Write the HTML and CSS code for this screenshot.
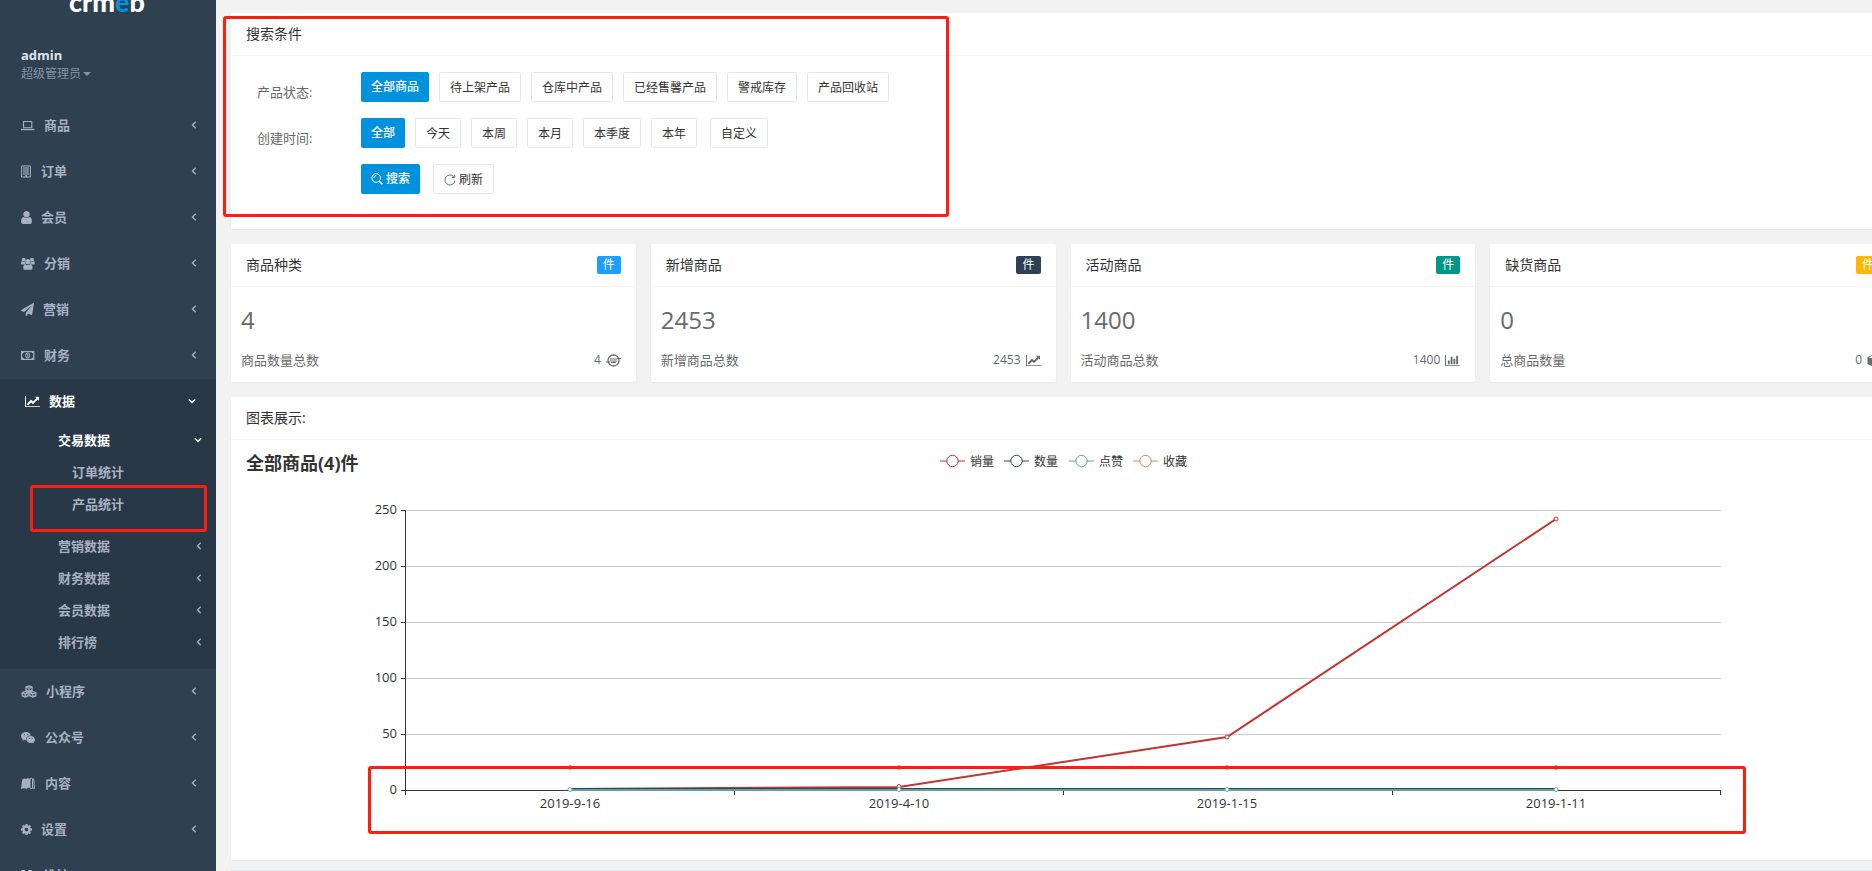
FILE: index.html
```html
<!DOCTYPE html>
<html lang="zh-CN">
<head>
<meta charset="utf-8">
<title>产品统计</title>
<link rel="stylesheet" href="styles.css">
</head>
<body>
<svg class="defs" aria-hidden="true">
  <symbol id="left" viewBox="0 0 6 8"><path d="M4.7 .8 1.5 4l3.2 3.2" fill="none" stroke="currentColor" stroke-width="1.3"/></symbol>
  <symbol id="down" viewBox="0 0 8 6"><path d="M.8 1.3 4 4.5l3.2-3.2" fill="none" stroke="currentColor" stroke-width="1.4"/></symbol>
  <symbol id="linechart" viewBox="0 0 2048 1792"><path fill="currentColor" d="M2048 1536v128h-2048v-1536h128v1408h1920zm-128-1248v435q0 21-19.5 29.5t-35.5-7.5l-121-121-633 633q-10 10-23 10t-23-10l-233-233-416 416-192-192 585-585q10-10 23-10t23 10l233 233 464-464-121-121q-16-16-7.5-35.5t29.5-19.5h435q14 0 23 9t9 23z"/></symbol>
</svg>
<div class="layout">
  <aside class="sidebar">
    <div class="brand">crm<span>e</span>b</div>
    <div class="profile">
      <strong>admin</strong>
      <a href="#">超级管理员<i class="caret"></i></a>
    </div>
    <nav>
      <ul class="menu">
        <li><a href="#"><svg width="14" height="13" viewBox="0 0 14 13"><path d="M2.6 2.5h8.2v6.200H2.600z" fill="none" stroke="currentColor" stroke-width="1.100"/><path d="M0 9.900h13.400v1.300H0z" fill="currentColor"/></svg><span>商品</span><svg class="arrow" width="6" height="8"><use href="#left"/></svg></a></li>
        <li><a href="#"><svg width="11" height="13" viewBox="0 0 11 13"><path d="M.6 1h8.800v11H.6z" fill="none" stroke="currentColor"/><path d="M2.200 3h5.800M2.200 5h5.800M2.200 7h5.800M2.200 9h5.800" stroke="currentColor" stroke-width="1.300" stroke-dasharray="1.500 .500"/><path d="M4.200 10h1.800v2H4.200z" fill="currentColor"/></svg><span>订单</span><svg class="arrow" width="6" height="8"><use href="#left"/></svg></a></li>
        <li><a href="#"><svg width="11" height="13" viewBox="256 128 1280 1536"><path fill="currentColor" d="M1536 1399q0 109-62.5 187t-150.5 78h-854q-88 0-150.5-78t-62.5-187q0-85 8.500-160.500t31.500-152 58.500-131 94-89 134.500-34.500q131 128 313 128t313-128q76 0 134.500 34.500t94 89 58.500 131 31.500 152 8.500 160.500zm-256-887q0 159-112.500 271.500t-271.500 112.500-271.500-112.500-112.500-271.500 112.500-271.500 271.500-112.500 271.500 112.500 112.500 271.500z"/></svg><span>会员</span><svg class="arrow" width="6" height="8"><use href="#left"/></svg></a></li>
        <li><a href="#"><svg width="14" height="13" viewBox="0 0 14 13" fill="currentColor"><circle cx="2.700" cy="2.600" r="1.900"/><circle cx="11" cy="2.600" r="1.900"/><circle cx="6.900" cy="4.700" r="2.600"/><path d="M0 7V5.500Q0 4 1.200 4.200q1.400.8 2.700.4-.2 1.600.8 2.900H1Q0 7.400 0 7zM13.700 7V5.500q0-1.500-1.200-1.300-1.400.8-2.700.4.2 1.600-.8 2.900h3.700q1 0 1-.5zM2.200 11.200q0-4 2.300-3.800 2.300 1.400 4.700 0 2.400-.2 2.400 3.800 0 1.500-1.700 1.500H3.900q-1.700 0-1.700-1.500z"/></svg><span>分销</span><svg class="arrow" width="6" height="8"><use href="#left"/></svg></a></li>
        <li><a href="#"><svg width="13" height="13" viewBox="0 0 1792 1792"><path fill="currentColor" d="M1764 11q33 24 27 64l-256 1536q-5 29-32 45-14 8-31 8-11 0-24-5l-453-185-242 295q-18 23-49 23-13 0-22-4-19-7-30.500-23.500t-11.500-36.500v-349l864-1059-1069 925-395-162q-37-14-40-55-2-40 32-59l1664-960q15-9 32-9 20 0 36 11z"/></svg><span>营销</span><svg class="arrow" width="6" height="8"><use href="#left"/></svg></a></li>
        <li><a href="#"><svg width="14" height="13" viewBox="0 0 14 13"><path d="M.6 2.600h12.200v7.800H.6z" fill="none" stroke="currentColor" stroke-width="1.200"/><path d="M1 3h2.200L1 5zM12.400 3v2l-2-2zM1 10V8l2.200 2zM12.400 10V8l-2 2z" fill="currentColor"/><ellipse cx="6.700" cy="6.500" rx="2" ry="2.500" fill="none" stroke="currentColor"/><path d="M6.700 5v3" stroke="currentColor"/></svg><span>财务</span><svg class="arrow" width="6" height="8"><use href="#left"/></svg></a></li>
        <li class="open">
          <a href="#"><svg width="15" height="13"><use href="#linechart"/></svg><span>数据</span><svg class="arrow" width="8" height="6"><use href="#down"/></svg></a>
          <ul class="sub">
            <li class="current"><a href="#"><span>交易数据</span><svg class="arrow" width="8" height="6"><use href="#down"/></svg></a>
              <ul class="third">
                <li><a href="#">订单统计</a></li>
                <li><a href="#">产品统计</a></li>
              </ul>
            </li>
            <li><a href="#"><span>营销数据</span><svg class="arrow" width="6" height="8"><use href="#left"/></svg></a></li>
            <li><a href="#"><span>财务数据</span><svg class="arrow" width="6" height="8"><use href="#left"/></svg></a></li>
            <li><a href="#"><span>会员数据</span><svg class="arrow" width="6" height="8"><use href="#left"/></svg></a></li>
            <li><a href="#"><span>排行榜</span><svg class="arrow" width="6" height="8"><use href="#left"/></svg></a></li>
          </ul>
        </li>
        <li><a href="#"><svg width="16" height="13" viewBox="0 0 15 13" fill="none" stroke="currentColor" stroke-width="1.300"><path d="M7.500.9 10.500 2v3.200L7.500 6.500l-3-1.300V2zM4.500 2l3 1.300 3-1.300M7.500 3.300v3M3.700 6.500l3 1.200v3L3.700 12l-3-1.300v-3zM.7 7.700l3 1.300 3-1.300M3.700 9v3M11.300 6.500l3 1.200v3l-3 1.300-3-1.300v-3zM8.300 7.700l3 1.300 3-1.300M11.300 9v3"/></svg><span>小程序</span><svg class="arrow" width="6" height="8"><use href="#left"/></svg></a></li>
        <li><a href="#"><svg width="15" height="13" viewBox="0 0 15 13"><path fill="currentColor" d="M5 .9c2.500 0 4.500 1.500 4.900 3.500-2.900 0-5 1.800-5 4.100l.1.700-1.800-.3-1.700.9.400-1.500C.7 7.400 0 6.200 0 4.900 0 2.700 2.300.9 5 .9z"/><path fill="currentColor" d="M9.700 4.900c2.400 0 4.300 1.600 4.300 3.600 0 1.100-.6 2-1.500 2.700l.4 1.300-1.500-.8-1.700.3c-2.400 0-4.300-1.600-4.300-3.500s1.900-3.600 4.300-3.600z"/><g fill="#2f4050"><circle cx="3.400" cy="3.600" r=".6"/><circle cx="6.700" cy="3.600" r=".6"/><circle cx="8.300" cy="7.500" r=".5"/><circle cx="11.100" cy="7.500" r=".5"/></g></svg><span>公众号</span><svg class="arrow" width="6" height="8"><use href="#left"/></svg></a></li>
        <li><a href="#"><svg width="15" height="13" viewBox="0 0 15 13"><path fill="currentColor" d="M1.200 2.500Q3.500.6 5.200 2q.8-1.500 4.300-.3v9.200q-2.900-.6-4 1Q3.200 10.400 0 12z"/><path d="M9 1.700q1.700-1 2.800.4h.9l.8 9.300q-2.400-.8-4.300.4M11.500 2v9" fill="none" stroke="currentColor"/></svg><span>内容</span><svg class="arrow" width="6" height="8"><use href="#left"/></svg></a></li>
        <li><a href="#"><svg width="11" height="13" viewBox="128 0 1536 1792"><path fill="currentColor" d="M1152 896q0-106-75-181t-181-75-181 75-75 181 75 181 181 75 181-75 75-181zm512-109v222q0 12-8 23t-20 13l-185 28q-19 54-39 91 35 50 107 138 10 12 10 25t-9 23q-27 37-99 108t-94 71q-12 0-26-9l-138-108q-44 23-91 38-16 136-29 186-7 28-36 28h-222q-14 0-24.500-8.500t-11.500-21.500l-28-184q-49-16-90-37l-141 107q-10 9-25 9-14 0-25-11-126-114-165-168-7-10-7-23 0-12 8-23 15-21 51-66.500t54-70.500q-27-50-41-99l-183-27q-13-2-21-12.500t-8-23.500v-222q0-12 8-23t19-13l186-28q14-46 39-92-40-57-107-138-10-12-10-24 0-10 9-23 26-36 98.500-107.500t94.500-71.500q13 0 26 10l138 107q44-23 91-38 16-136 29-186 7-28 36-28h222q14 0 24.500 8.500t11.500 21.500l28 184q49 16 90 37l142-107q9-9 24-9 13 0 25 10 129 119 165 170 7 8 7 22 0 12-8 23-15 21-51 66.500t-54 70.500q26 50 41 98l183 28q13 2 21 12.500t8 23.500z"/></svg><span>设置</span><svg class="arrow" width="6" height="8"><use href="#left"/></svg></a></li>
        <li><a href="#"><svg width="13" height="13" viewBox="0 0 13 13"><path d="M0 1h4v4H0zM7 1h4v4H7zM0 8h4v4H0zM7 8h4v4H7z" fill="currentColor"/></svg><span>维护</span><svg class="arrow" width="6" height="8"><use href="#left"/></svg></a></li>
      </ul>
    </nav>
  </aside>

  <main class="main">
    <div class="content">
      <section class="card">
        <h2 class="card-head">搜索条件</h2>
        <form class="filters" onsubmit="return false">
          <div class="filter" role="group" aria-labelledby="l-status">
            <span class="label" id="l-status">产品状态:</span>
            <div class="buttons"><button class="btn primary">全部商品</button><button class="btn">待上架产品</button><button class="btn">仓库中产品</button><button class="btn">已经售馨产品</button><button class="btn">警戒库存</button><button class="btn">产品回收站</button></div>
          </div>
          <div class="filter" role="group" aria-labelledby="l-time">
            <span class="label" id="l-time">创建时间:</span>
            <div class="buttons"><button class="btn primary">全部</button><button class="btn">今天</button><button class="btn">本周</button><button class="btn">本月</button><button class="btn">本季度</button><button class="btn">本年</button><button class="btn apart">自定义</button></div>
          </div>
          <div class="filter">
            <span class="label"></span>
            <div class="buttons"><button class="btn primary"><svg width="12" height="12" viewBox="0 0 12 12" fill="none" stroke="currentColor"><circle cx="5.200" cy="5" r="4.300"/><path d="M2.800 5A2.400 2.400 0 0 1 5 2.600" stroke-width=".8"/><path d="m8.300 8.200 3 3" stroke-width="1.500"/></svg>搜索</button><button class="btn apart"><svg width="12" height="12" viewBox="0 0 12 12" fill="none" stroke="#666"><path d="M10.900 6.500A5 5 0 1 1 9.600 2.600"/><path d="M10.700.8v2.700H8"/></svg>刷新</button></div>
          </div>
        </form>
      </section>

      <div class="stats">
        <section class="card">
          <h2 class="card-head">商品种类<span class="badge blue">件</span></h2>
          <div class="stat"><p class="number">4</p><p class="line"><span>商品数量总数</span><span class="total">4<svg width="15" height="13" viewBox="0 0 15 13" fill="none" stroke="currentColor"><circle cx="7.500" cy="6.500" r="5.500" stroke-width="1.300"/><path d="M4 5h7M4 7h7M5 8.500h5" stroke-width="1.200"/><path d="M0 8h4M11 4.500h4" stroke-width="1.200"/></svg></span></p></div>
        </section>
        <section class="card">
          <h2 class="card-head">新增商品<span class="badge navy">件</span></h2>
          <div class="stat"><p class="number">2453</p><p class="line"><span>新增商品总数</span><span class="total">2453<svg width="15" height="13"><use href="#linechart"/></svg></span></p></div>
        </section>
        <section class="card">
          <h2 class="card-head">活动商品<span class="badge green">件</span></h2>
          <div class="stat"><p class="number">1400</p><p class="line"><span>活动商品总数</span><span class="total">1400<svg width="15" height="13" viewBox="0 0 2048 1792"><path fill="currentColor" d="M640 896v512h-256v-512h256zm384-512v1024h-256v-1024h256zm1024 1152v128h-2048v-1536h128v1408h1920zm-640-896v768h-256v-768h256zm384-384v1152h-256v-1152h256z"/></svg></span></p></div>
        </section>
        <section class="card">
          <h2 class="card-head">缺货商品<span class="badge amber">件</span></h2>
          <div class="stat"><p class="number">0</p><p class="line"><span>总商品数量</span><span class="total">0<svg width="13" height="13" viewBox="0 0 13 13"><path d="M6.500.5 12.500 3v7l-6 2.700-6-2.700V3z" fill="currentColor"/><path d="m1.500 3.200 5 2 5-2-5-1.700z" fill="#fff"/><path d="M7 6.200v5.200l4.500-2V4.300z" fill="#fff"/></svg></span></p></div>
        </section>
      </div>

      <section class="card">
        <h2 class="card-head">图表展示:</h2>
        <div class="chart-body">
          <svg class="chart" viewBox="0 0 1644 400" role="img" aria-label="全部商品(4)件">
            <text class="title" x="5" y="20">全部商品(4)件</text>
            <g class="legend">
              <g stroke="#c23531"><path d="M699 11h25"/><circle cx="711.500" cy="11" r="5.700"/></g><text x="729" y="16">销量</text>
              <g stroke="#2f4554"><path d="M763 11h25"/><circle cx="775.500" cy="11" r="5.700"/></g><text x="793" y="16">数量</text>
              <g stroke="#61a0a8"><path d="M828 11h25"/><circle cx="840.500" cy="11" r="5.700"/></g><text x="858" y="16">点赞</text>
              <g stroke="#d48265"><path d="M892 11h25"/><circle cx="904.500" cy="11" r="5.700"/></g><text x="922" y="16">收藏</text>
            </g>
            <path class="grid" d="M164 60.500h1316M164 116.500h1316M164 172.500h1316M164 228.500h1316M164 284.500h1316"/>
            <path class="axis" d="M164.500 60v285M160 340.500h1320M160 60.500h5M160 116.500h5M160 172.500h5M160 228.500h5M160 284.500h5M493.500 340v5M822.500 340v5M1151.500 340v5M1479.500 340v5"/>
            <g class="tick end"><text x="156" y="64">250</text><text x="156" y="120">200</text><text x="156" y="176">150</text><text x="156" y="232">100</text><text x="156" y="288">50</text><text x="156" y="344">0</text></g>
            <g class="tick mid"><text x="329" y="358">2019-9-16</text><text x="658" y="358">2019-4-10</text><text x="986" y="358">2019-1-15</text><text x="1315" y="358">2019-1-11</text></g>
            <g class="series" stroke="#d48265"><path d="M329 317.500h986"/><circle cx="329" cy="317.500" r="2"/><circle cx="658" cy="317.500" r="2"/><circle cx="986" cy="317.500" r="2"/><circle cx="1315" cy="317.500" r="2"/></g>
            <g class="series" stroke="#c23531"><path d="M329 339 658 337 986 287 1315 69"/><circle cx="658" cy="336.500" r="2"/><circle cx="986" cy="287" r="2"/><circle cx="1315" cy="69" r="2"/></g>
            <g class="series" stroke="#2f4554"><path d="M329 339h986"/></g>
            <g class="series" stroke="#61a0a8"><path d="M329 340h986"/><circle cx="329" cy="339.500" r="2"/><circle cx="658" cy="339.500" r="2"/><circle cx="986" cy="339.500" r="2"/><circle cx="1315" cy="339.500" r="2"/></g>
          </svg>
        </div>
      </section>
      <div class="next-panel"></div>
    </div>
  </main>
</div>
<div class="mark mark-search"></div>
<div class="mark mark-menu"></div>
<div class="mark mark-axis"></div>
</body>
</html>
```
FILE: styles.css
```css
* { box-sizing: border-box; }

body {
  margin: 0;
  height: 100vh;
  overflow: hidden;
  position: relative;
  background: #f2f2f2;
  color: #676a6c;
  font: 13px/20px "Open Sans", "Noto Sans CJK SC", sans-serif;
}

ul, p, h2 { margin: 0; padding: 0; }
ul { list-style: none; }
a { color: inherit; text-decoration: none; }
svg { flex: none; }
.defs { position: absolute; width: 0; height: 0; }

.layout { display: flex; height: 100%; }

/* Sidebar */
.sidebar {
  flex: 0 0 216px;
  background: #2f4050;
  color: #a7b1c2;
  overflow: hidden;
}

.brand {
  height: 24px;
  margin-top: -10px;
  padding-right: 2px;
  color: #fff;
  font: 900 27px/24px Lato, sans-serif;
  text-align: center;
}
.brand span { color: #0092dc; }

.profile {
  display: flex;
  flex-direction: column;
  padding: 32px 21px 20px;
  line-height: 18px;
}
.profile strong { color: #dfe4ed; }
.profile a { display: flex; align-items: center; gap: 2px; padding-top: 1px; color: #8095a8; font-size: 12px; }
.caret { border: 4px solid transparent; border-top-color: currentColor; border-bottom: 0; }

.menu a { display: flex; align-items: center; font-weight: 700; }
.menu > li > a { gap: 9px; height: 46px; padding: 0 19px 2px 21px; }
.menu .arrow { margin-left: auto; }
.menu > li.open { padding-bottom: 10px; background: #293846; border-left: 4px solid #293846; }
.menu > li.open > a { padding-right: 20px; color: #fff; }
.sub a { height: 32px; padding: 0 14px 2px 54px; }
.sub .current > a { color: #fff; }
.third { padding-bottom: 10px; }
.third a { padding-left: 68px; }

/* Content */
.main { flex: 1; min-width: 0; overflow: hidden; padding: 13px 0 0 15px; }
.content { display: flex; flex-direction: column; gap: 15px; margin-right: -23px; }

.card { background: #fff; border-radius: 2px; box-shadow: 0 1px 2px rgba(0, 0, 0, .05); }
.card-head {
  display: flex;
  justify-content: space-between;
  align-items: center;
  height: 43px;
  padding: 0 15px;
  border-bottom: 1px solid #f6f6f6;
  color: #333;
  font-size: 14px;
  font-weight: 400;
}

.filters { display: flex; flex-direction: column; gap: 11px; padding: 16px 26px 30px; }
.filter { display: flex; height: 35px; }
.label { width: 104px; padding-top: 5px; line-height: 30px; }
.buttons { display: flex; gap: 10px; align-items: flex-start; }
.btn {
  display: flex;
  align-items: center;
  gap: 3px;
  height: 30px;
  padding: 1px 10px 0;
  border: 1px solid #e7e7e7;
  border-radius: 2px;
  background: #fff;
  color: #333;
  font: inherit;
  font-size: 12px;
}
.btn.primary { border: 0; padding: 0 10px 1px; background: #0092dc; color: #fff; font-weight: 500; }
.btn.apart { margin-left: 3px; }

.stats { display: grid; grid-template-columns: repeat(4, 1fr); gap: 15px; }
.badge { padding: 0 6px; border-radius: 2px; color: #fff; font-size: 12px; line-height: 18px; }
.blue { background: #1e9fff; }
.navy { background: #2f4056; }
.green { background: #009688; }
.amber { background: #ffb800; }

.stat { padding: 15px 15px 12px 10px; }
.number { margin-bottom: 12px; font-size: 24px; line-height: 36px; }
.line { display: flex; justify-content: space-between; }
.total { display: flex; align-items: center; gap: 5px; font-size: 12px; }

/* Chart */
.chart-body { padding: 10px; }
.chart { display: block; width: 100%; height: auto; fill: #333; font-size: 12px; }
.title { font-size: 18px; font-weight: 700; }
.legend g { fill: #fff; }
.grid { stroke: #ccc; }
.axis { fill: none; stroke: #333; }
.tick { font-size: 13px; }
.end { text-anchor: end; }
.mid { text-anchor: middle; }
.series path { fill: none; stroke-width: 2; }
.series circle { fill: #fff; }

.next-panel { height: 40px; margin-top: -5px; border-top: 1px solid #e7eaec; background: #f6f6f6; }

/* Highlight frames laid over the page */
.mark { position: absolute; border: 3px solid #ff1d10; border-radius: 3px; pointer-events: none; }
.mark-search { left: 223px; top: 16px; width: 726px; height: 201px; }
.mark-menu { left: 30px; top: 485px; width: 177px; height: 47px; }
.mark-axis { left: 368px; top: 766px; width: 1378px; height: 68px; }
```
